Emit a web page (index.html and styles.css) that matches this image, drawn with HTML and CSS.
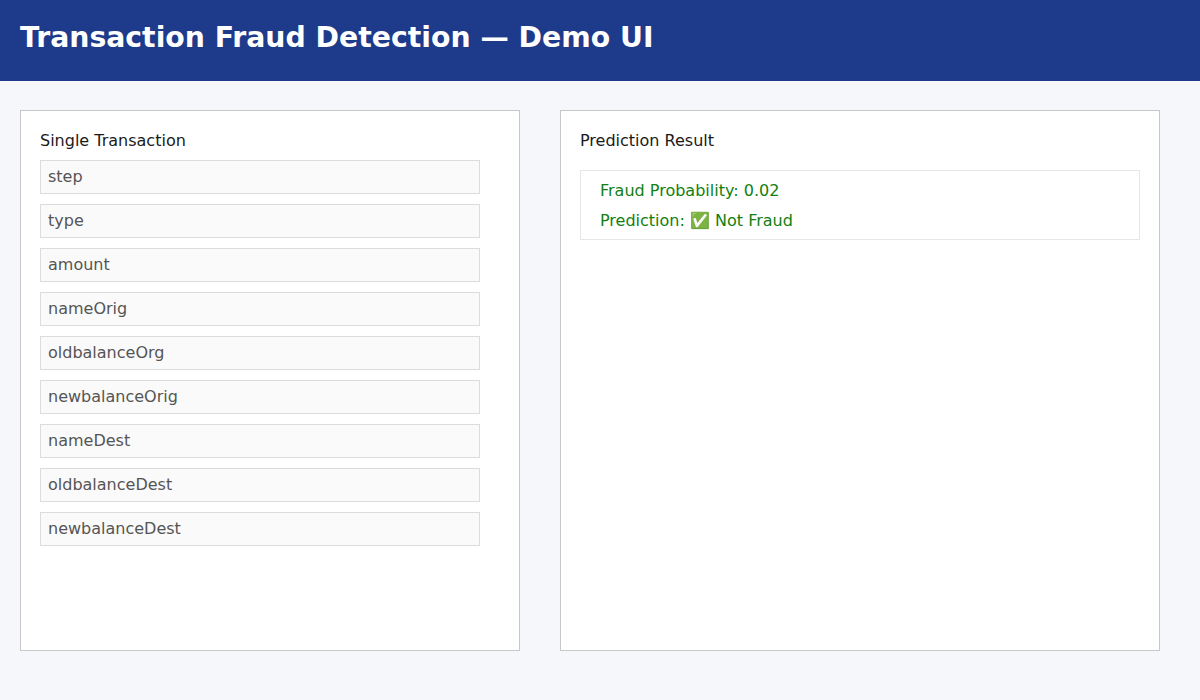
FILE: index.html
```html
<!DOCTYPE html>
<html lang="en">
<head>
<meta charset="utf-8">
<title>Transaction Fraud Detection — Demo UI</title>
<link rel="stylesheet" href="styles.css">
</head>
<body>
<header class="topbar">
  <h1 class="title">Transaction Fraud Detection — Demo UI</h1>
</header>
<main class="layout">
  <section class="panel">
    <h2 class="panel-title">Single Transaction</h2>
    <div class="fields">
      <div class="field">step</div>
      <div class="field">type</div>
      <div class="field">amount</div>
      <div class="field">nameOrig</div>
      <div class="field">oldbalanceOrg</div>
      <div class="field">newbalanceOrig</div>
      <div class="field">nameDest</div>
      <div class="field">oldbalanceDest</div>
      <div class="field">newbalanceDest</div>
    </div>
  </section>
  <section class="panel panel-wide">
    <h2 class="panel-title result-title">Prediction Result</h2>
    <div class="result">
      <div class="result-line">Fraud Probability: 0.02</div>
      <div class="result-line">Prediction: ✅ Not Fraud</div>
    </div>
  </section>
</main>
</body>
</html>
```
FILE: styles.css
```css
html, body {
  margin: 0;
  padding: 0;
}
body {
  background: #f6f7fb;
  font-family: "DejaVu Sans", sans-serif;
  color: #222;
  width: 1200px;
  height: 700px;
  overflow: hidden;
}
.topbar {
  background: #1e3a8a;
  height: 81px;
  box-sizing: border-box;
  padding: 0 20px;
  display: flex;
  align-items: center;
}
.title {
  margin: 0 0 6px 0;
  color: #ffffff;
  font-size: 28.3px;
  font-weight: bold;
  line-height: 32px;
}
.layout {
  display: flex;
  gap: 40px;
  padding: 29px 20px 0 20px;
}
.panel {
  width: 500px;
  height: 541px;
  box-sizing: border-box;
  background: #ffffff;
  border: 1px solid #c8c8c8;
  padding: 20px 19px;
}
.panel-wide {
  width: 600px;
}
.panel-title {
  margin: 0 0 9px 0;
  font-size: 16px;
  font-weight: normal;
  line-height: 20px;
  color: #1a1a1a;
}
.result-title {
  margin-bottom: 19px;
}
.fields {
  display: flex;
  flex-direction: column;
  gap: 10px;
  width: 440px;
}
.field {
  height: 34px;
  box-sizing: border-box;
  background: #fafafa;
  border: 1px solid #dcdcdc;
  padding: 0 7px;
  font-size: 16px;
  line-height: 32px;
  color: #555555;
}
.result {
  border: 1px solid #e6e6e6;
  padding: 5px 19px 3px 19px;
  color: #118011;
  font-size: 16px;
}
.result-line {
  line-height: 30px;
}
```
